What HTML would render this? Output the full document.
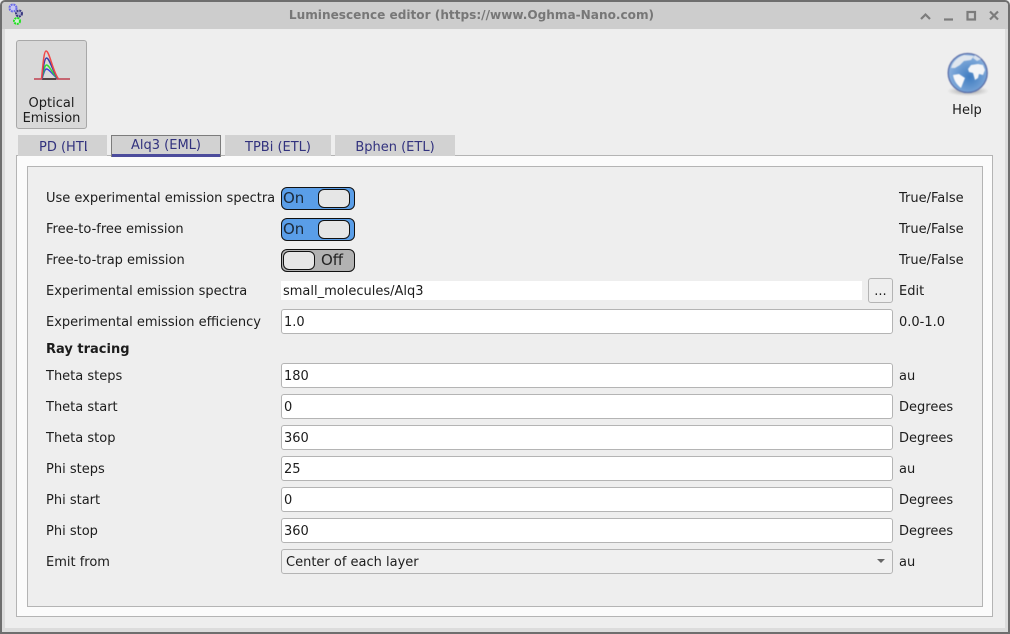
<!DOCTYPE html>
<html><head><meta charset="utf-8"><style>
html,body{margin:0;padding:0;background:#fff}
#w{position:relative;width:1010px;height:634px;overflow:hidden;background:#eee;font-family:"DejaVu Sans",sans-serif;font-size:13px;color:#1c1c1c}
#w div{position:absolute;box-sizing:border-box;white-space:nowrap}
.t{line-height:18px;height:18px}
.i{left:281px;width:612px;height:25px;background:#fff;border:1px solid #b4b4b4;border-radius:3px;line-height:25px;padding-left:2px}
.tab{top:135px;height:21px;background:#d2d2d2;color:#32327e;text-align:center;line-height:25px}
.sw{left:281px;width:74px;height:23px;border:1px solid #111;border-radius:6px;font-size:15px;line-height:21px}
.k{top:1px;width:32px;height:19px;background:#e6e6e6;border:1px solid #111;border-radius:6px}
</style></head><body><div id="w">
<div style="left:0;top:0;width:1010px;height:634px;background:#dcdcdc;border:2px solid #6e6e6e;border-radius:5px 5px 0 0"></div>
<div style="left:2px;top:2px;width:1006px;height:27px;background:#cdcdcd;border-radius:3px 3px 0 0"></div>
<div style="left:5px;top:29px;width:1000px;height:599px;background:#eee"></div>
<svg style="position:absolute;left:6px;top:3px" width="20" height="24" viewBox="0 0 20 24">
<circle cx="7" cy="5" r="3.5" fill="#c8c8f4" stroke="#6a6ae8" stroke-width="2" stroke-dasharray="2 .8"/>
<circle cx="13" cy="10.500" r="3" fill="#a8a8c8" stroke="#3a3a80" stroke-width="2" stroke-dasharray="2 .8"/>
<circle cx="11" cy="18" r="3" fill="#d0f0d0" stroke="#22e022" stroke-width="2" stroke-dasharray="2 .8"/>
</svg>
<div class="t" style="left:0;width:943px;top:6px;text-align:center;font-weight:bold;font-size:12.100px;color:#777">Luminescence editor (https://www.Oghma-Nano.com)</div>
<svg style="position:absolute;left:918px;top:8px" width="84" height="16" viewBox="0 0 84 16" fill="none" stroke="#7c7c7c" stroke-width="2.200">
<path d="M3 11 L7.500 6.500 L12 11"/>
<path d="M26 11.500 H35"/>
<rect x="49.500" y="4" width="7.500" height="7.500"/>
<path d="M72 3.500 L80 11.500 M80 3.500 L72 11.500"/>
</svg>

<div style="left:16px;top:40px;width:71px;height:89px;background:#d9d9d9;border:1px solid #a8a8a8;border-radius:3px"></div>
<svg style="position:absolute;left:32px;top:48px" width="40" height="34" viewBox="0 0 40 34" fill="none" stroke-width="1.400">
<path d="M2 31 H38" stroke="#c04050"/>
<path d="M10 31 H24" stroke="#222"/>
<path d="M10 31 C11.500 26 12.500 21 14.500 21 C17.500 21 20.500 27 26 31" stroke="#3e3ee0"/>
<path d="M10 31 C11.500 24 12.500 17 14.500 17 C17.500 17 20.500 26 26 31" stroke="#30e030"/>
<path d="M10 31 C11 20 12.500 10 14.500 10 C17.500 10 21 24 26 31" stroke="#3a3aa8" stroke-width="1.500"/>
<path d="M9.500 31 C11 16 12 3 14 3 C17.500 3 20.500 23 26.500 31" stroke="#f04848" stroke-width="1.500"/>
</svg>
<div class="t" style="left:16px;width:71px;top:95px;text-align:center">Optical</div>
<div class="t" style="left:16px;width:71px;top:110px;text-align:center">Emission</div>

<svg style="position:absolute;left:944px;top:50px;filter:blur(.4px)" width="48" height="48" viewBox="0 0 48 48">
<defs><radialGradient id="g" cx=".55" cy=".6" r=".6"><stop offset="0" stop-color="#3f7cc0"/><stop offset="1" stop-color="#8fb4e0"/></radialGradient>
<radialGradient id="s"><stop offset="0" stop-color="#555" stop-opacity=".6"/><stop offset="1" stop-color="#777" stop-opacity="0"/></radialGradient></defs>
<ellipse cx="24" cy="41" rx="21" ry="5" fill="url(#s)"/>
<circle cx="23.700" cy="23" r="19.500" fill="url(#g)" stroke="#5a6ea8" stroke-width="1.300"/>
<path d="M7 18 C9 11 14 7 20 5 L30 6 L27 10 L20 11 L16 15 L11 18Z" fill="#dfe6ee"/>
<path d="M9 25 L15 24 L21 28 L19 33 L17 38 C13 35 10 31 9 25Z" fill="#f6f7f9"/>
<path d="M24 19 L27 15 L34 14 L39 15 L41 20 L39 25 L35 24 L34 28 L31 30 L29 23 L25 22Z" fill="#f2f4f7"/>
<path d="M31 5 L37 9 L33 11 L29 8Z" fill="#d8e2ee"/>
</svg>
<div class="t" style="left:937px;width:60px;top:102px;text-align:center">Help</div>

<div style="left:16px;top:155px;width:977px;height:462px;background:#fbfbfb;border:1px solid #b4b4b4"></div>
<div style="left:27px;top:166px;width:956px;height:441px;background:#eee;border:1px solid #b4b4b4"></div>

<div class="tab" style="left:18px;width:89px;overflow:hidden"><span style="position:absolute;left:21px;top:0;width:48px;overflow:hidden;text-align:left">PD (HTL</span></div>
<div class="tab" style="left:111px;top:135px;width:110px;height:22px;border:1px solid #7c7c7c;border-bottom:0;line-height:19px"><div style="left:0;right:0;bottom:0;height:3px;background:#4c4c9c"></div>Alq3 (EML)</div>
<div class="tab" style="left:225px;width:106px">TPBi (ETL)</div>
<div class="tab" style="left:335px;width:120px">Bphen (ETL)</div>

<div class="t" style="left:46px;top:190px">Use experimental emission spectra</div>
<div class="t" style="left:46px;top:221px">Free-to-free emission</div>
<div class="t" style="left:46px;top:252px">Free-to-trap emission</div>
<div class="t" style="left:46px;top:283px">Experimental emission spectra</div>
<div class="t" style="left:46px;top:314px">Experimental emission efficiency</div>
<div class="t" style="left:46px;top:341px;font-weight:bold">Ray tracing</div>
<div class="t" style="left:46px;top:368px">Theta steps</div>
<div class="t" style="left:46px;top:399px">Theta start</div>
<div class="t" style="left:46px;top:430px">Theta stop</div>
<div class="t" style="left:46px;top:461px">Phi steps</div>
<div class="t" style="left:46px;top:492px">Phi start</div>
<div class="t" style="left:46px;top:523px">Phi stop</div>
<div class="t" style="left:46px;top:554px">Emit from</div>

<div class="sw" style="top:187px;background:#5a9ee8;padding-left:1px;color:#1c2a3a">On<div class="k" style="left:36px"></div></div>
<div class="sw" style="top:218px;background:#5a9ee8;padding-left:1px;color:#1c2a3a">On<div class="k" style="left:36px"></div></div>
<div class="sw" style="top:249px;background:#b2b2b2;padding-left:39px;color:#222">Off<div class="k" style="left:1px"></div></div>

<div style="left:281px;top:281px;width:581px;height:19px;background:#fff;line-height:21px;padding-left:2px">small_molecules/Alq3</div>
<div style="left:868px;top:278px;width:25px;height:25px;background:#eee;border:1px solid #b4b4b4;border-radius:3px;text-align:center;line-height:25px">...</div>

<div class="i" style="top:309px">1.0</div>
<div class="i" style="top:363px">180</div>
<div class="i" style="top:394px">0</div>
<div class="i" style="top:425px">360</div>
<div class="i" style="top:456px">25</div>
<div class="i" style="top:487px">0</div>
<div class="i" style="top:518px">360</div>
<div class="i" style="top:549px;background:#f0f0f0;padding-left:4px">Center of each layer<div style="left:595px;top:9px;width:0;height:0;border:4px solid transparent;border-top:4px solid #666;border-bottom:0"></div></div>

<div class="t" style="left:899px;top:190px">True/False</div>
<div class="t" style="left:899px;top:221px">True/False</div>
<div class="t" style="left:899px;top:252px">True/False</div>
<div class="t" style="left:899px;top:283px">Edit</div>
<div class="t" style="left:899px;top:314px">0.0-1.0</div>
<div class="t" style="left:899px;top:368px">au</div>
<div class="t" style="left:899px;top:399px">Degrees</div>
<div class="t" style="left:899px;top:430px">Degrees</div>
<div class="t" style="left:899px;top:461px">au</div>
<div class="t" style="left:899px;top:492px">Degrees</div>
<div class="t" style="left:899px;top:523px">Degrees</div>
<div class="t" style="left:899px;top:554px">au</div>
</div></body></html>
